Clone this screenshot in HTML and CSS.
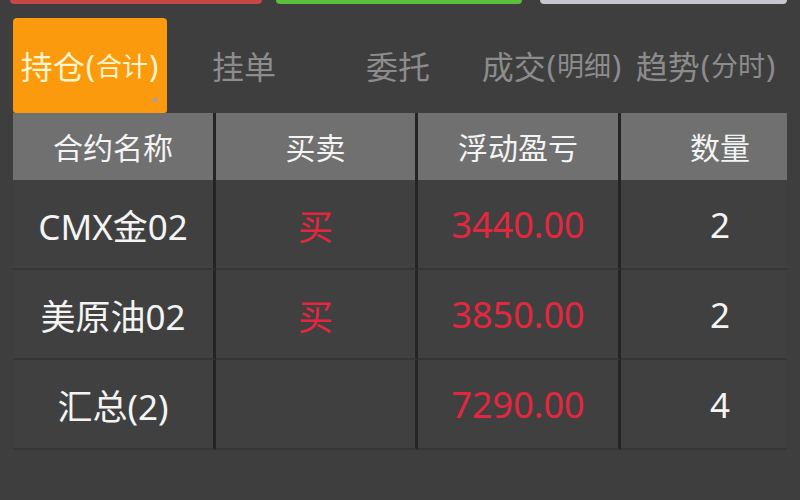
FILE: index.html
```html
<!DOCTYPE html>
<html lang="zh-CN">
<head>
<meta charset="utf-8">
<title>持仓</title>
<link rel="stylesheet" href="styles.css">
</head>
<body>
<div class="page">
  <div class="btnbar">
    <div class="btn btn-red"></div>
    <div class="btn btn-green"></div>
    <div class="btn btn-gray"></div>
  </div>
  <div class="tabs">
    <div class="tab active">持仓<span class="paren">(</span><span class="sub">合计</span><span class="paren">)</span><span class="corner"></span></div>
    <div class="tab">挂单</div>
    <div class="tab">委托</div>
    <div class="tab">成交<span class="paren">(</span><span class="sub">明细</span><span class="paren">)</span></div>
    <div class="tab">趋势<span class="paren">(</span><span class="sub">分时</span><span class="paren">)</span></div>
  </div>
  <div class="table">
    <div class="th">合约名称</div>
    <div class="th">买卖</div>
    <div class="th">浮动盈亏</div>
    <div class="th last qty">数量</div>

    <div class="td">CMX金02</div>
    <div class="td red cjk">买</div>
    <div class="td red num">3440.00</div>
    <div class="td last qty">2</div>

    <div class="td">美原油02</div>
    <div class="td red cjk">买</div>
    <div class="td red num">3850.00</div>
    <div class="td last qty">2</div>

    <div class="td">汇总(2)</div>
    <div class="td"></div>
    <div class="td red num">7290.00</div>
    <div class="td last qty">4</div>
  </div>
</div>
</body>
</html>
```
FILE: styles.css
```css
html, body {
  margin: 0;
  padding: 0;
  background: #3e3e3e;
}
body {
  width: 800px;
  height: 500px;
  overflow: hidden;
  font-family: "Noto Sans", "Noto Sans CJK SC", sans-serif;
  color: #f2f2f2;
}
.page {
  padding: 0 13px;
}
.btnbar {
  display: flex;
  height: 4px;
  margin-left: -3px;
}
.btn {
  height: 4px;
  border-radius: 0 0 8px 8px;
}
.btn-red { width: 252px; background: #c44848; margin-right: 14px; }
.btn-green { width: 246px; background: #5bbf3b; margin-right: 18px; }
.btn-gray { width: 247px; background: #c6c6cd; }

.tabs {
  display: flex;
  margin-top: 14px;
  height: 95px;
}
.tab {
  position: relative;
  width: 154px;
  display: flex;
  align-items: center;
  justify-content: center;
  font-size: 32px;
  color: #8c8c8c;
  white-space: nowrap;
  padding-bottom: 2px;
  box-sizing: border-box;
}
.tab .paren {
  font-size: 31px;
  margin: 0 1px;
}
.tab .sub {
  font-size: 27px;
}
.tab.active {
  background: #fb9a0c;
  color: #fff6d2;
  border-radius: 4px 4px 3px 3px;
}
.tab.active .sub { font-size: 26px; }
.corner {
  position: absolute;
  right: 10px;
  bottom: 11px;
  width: 0;
  height: 0;
  border-left: 6px solid transparent;
  border-bottom: 6px solid #a3a0a8;
}

.table {
  display: grid;
  grid-template-columns: 203px 202px 203px 166px;
  grid-template-rows: 67px 90px 90px 90px;
}
.th, .td {
  display: flex;
  align-items: center;
  justify-content: center;
  border-right: 3px solid #242424;
  white-space: nowrap;
}
.th {
  background: #707070;
  font-size: 30px;
  color: #f4f4f4;
  padding-bottom: 2px;
}
.th.last { border-right: 0; }
.td {
  font-size: 35px;
  color: #f4f4f4;
  border-bottom: 2px solid #353535;
  background: #404040;
}
.td.last { border-right: 0; }
.qty { padding-left: 32px; }
.red { color: #e4263e; }
.num { font-size: 36px; }
.cjk { font-size: 35px; }
```
